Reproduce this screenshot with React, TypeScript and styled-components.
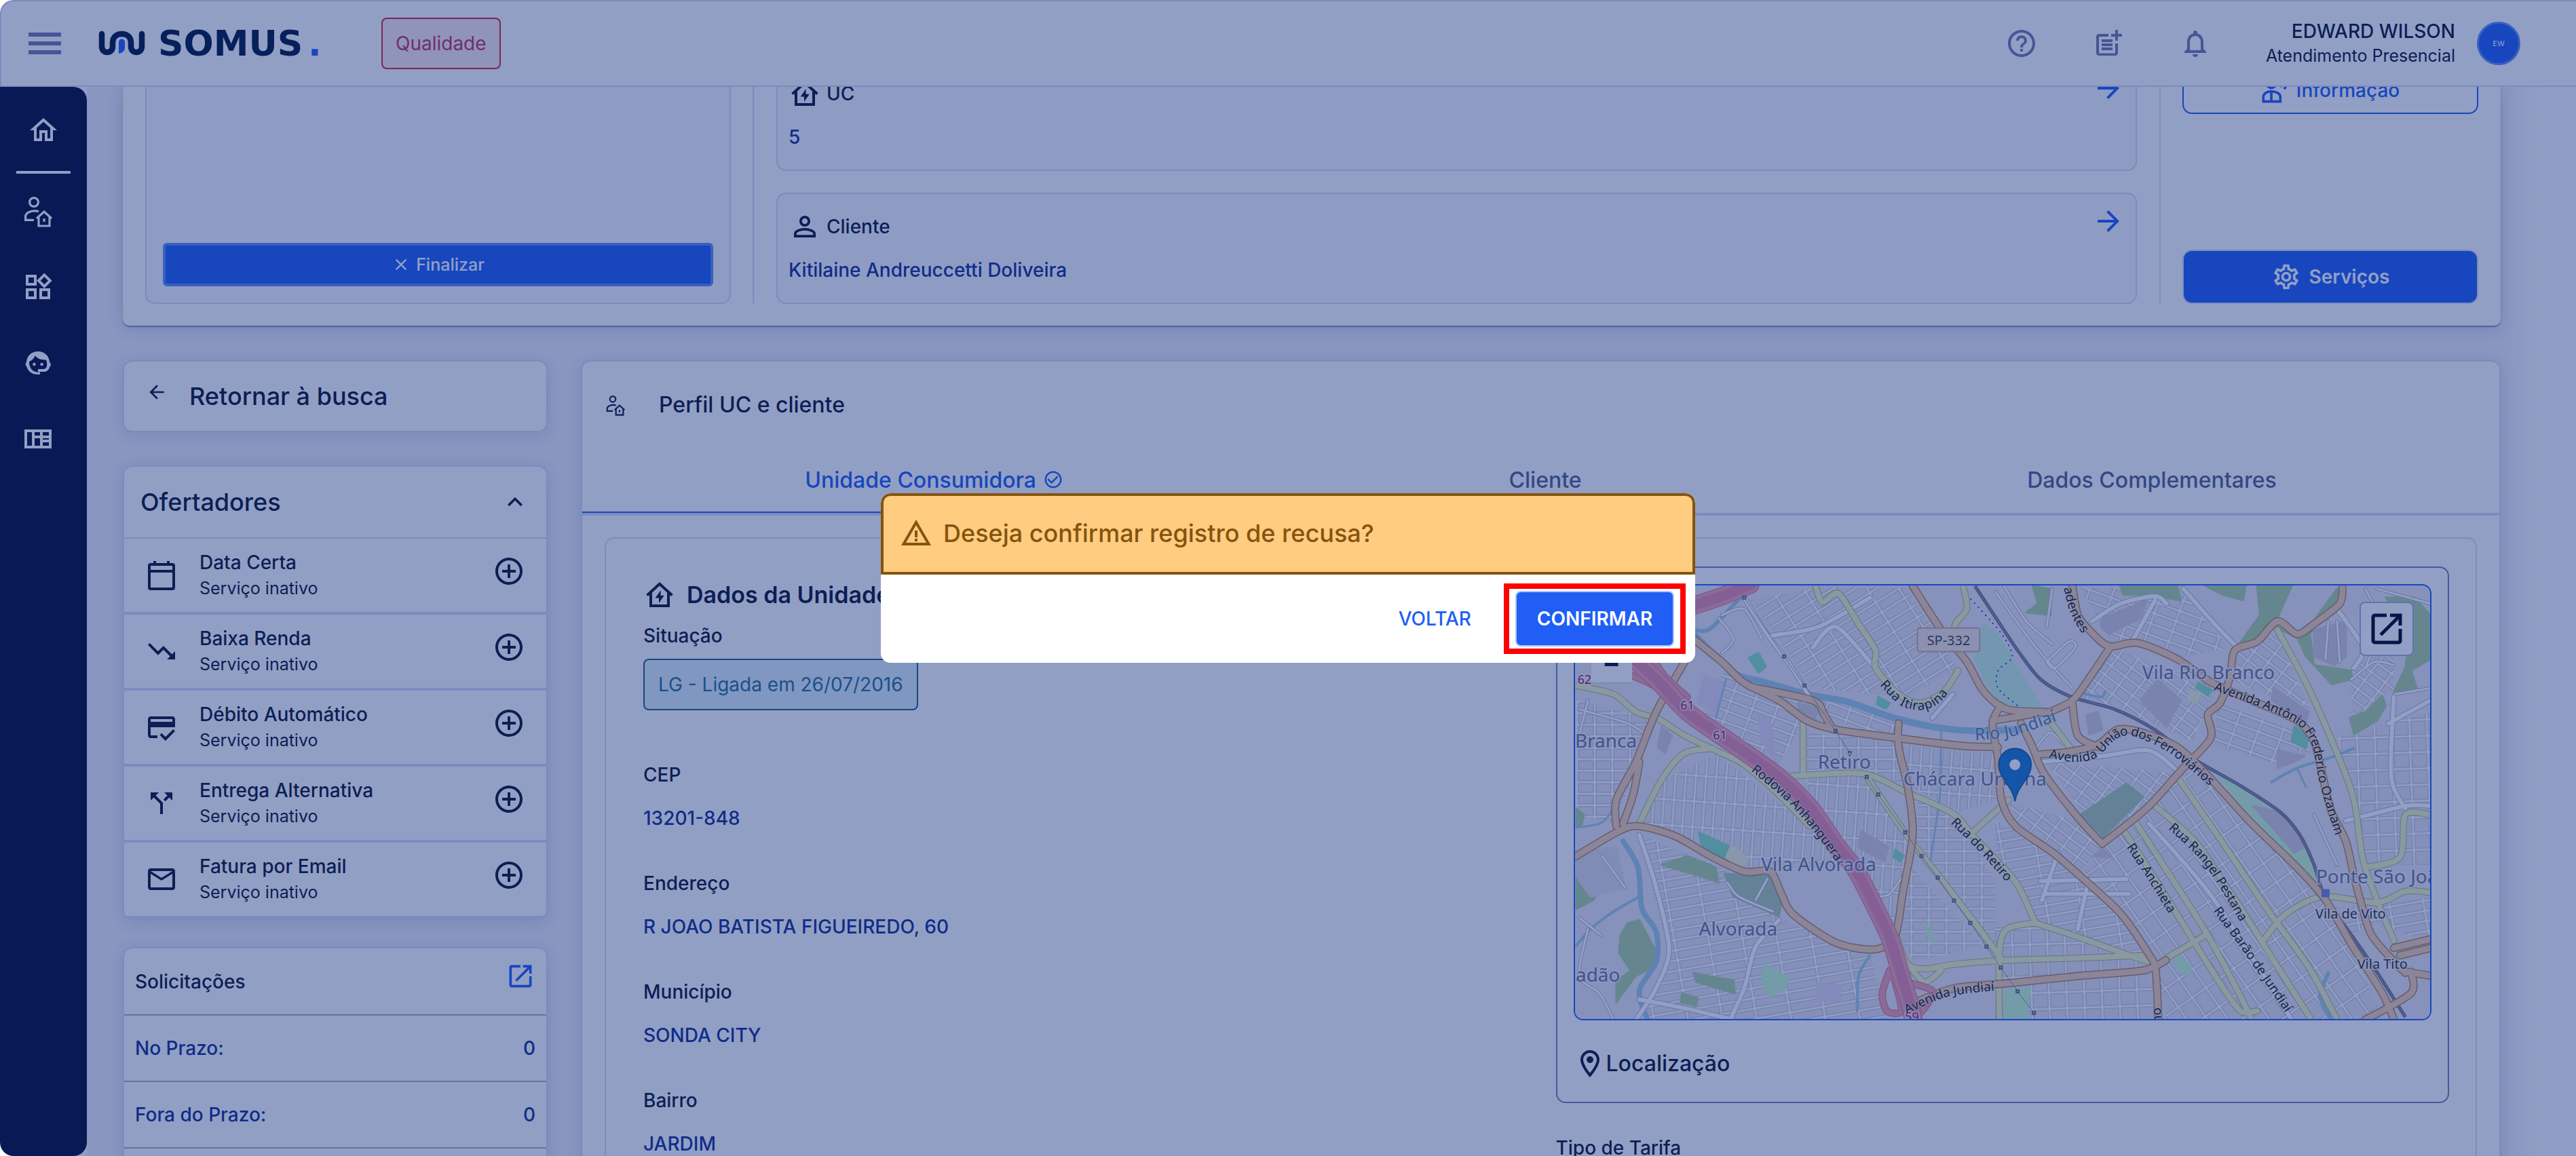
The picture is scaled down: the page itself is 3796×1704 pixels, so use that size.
import React from "react";
import styled, { createGlobalStyle } from "styled-components";
import {
  MdAddCircleOutline,
  MdArrowBack,
  MdCallSplit,
  MdCheckCircleOutline,
  MdClose,
  MdHelpOutline,
  MdKeyboardArrowUp,
  MdMailOutline,
  MdNotificationsNone,
  MdOpenInNew,
  MdOutlineCreditScore,
  MdOutlineHome,
  MdOutlineLocationOn,
  MdOutlineSettings,
  MdOutlineWidgets,
  MdPersonOutline,
  MdPostAdd,
  MdTrendingDown,
  MdWarningAmber,
} from "react-icons/md";

const color = {
  ink: "#0c1534",
  navy: "#040b37",
  logo: "#001843",
  blue: "#205ef5",
  value: "#122f93",
  muted: "#7479ac",
  line: "#d5daf4",
  panel: "#f7f9ff",
  page: "#eeeff8",
};

const GlobalStyle = createGlobalStyle`
  *, *::before, *::after { box-sizing: border-box; }
  body {
    margin: 0;
    background: #fff;
    color: ${color.ink};
    font-family: Inter, "Liberation Sans", sans-serif;
    font-size: 28px;
    line-height: 36px;
  }
  h1, h2, h3, p, dl, dd, ul { margin: 0; padding: 0; font-weight: inherit; }
  button { font-family: inherit; cursor: pointer; }
  svg { display: block; flex: none; }
`;

/* ---------- shell ---------- */

const Shell = styled.div`
  display: flex;
  flex-direction: column;
  height: 100vh;
  overflow: hidden;
  border-radius: 20px 0 0 20px;
  background: #fff;
`;

const Header = styled.header`
  flex: none;
  display: flex;
  align-items: center;
  height: 128px;
  padding: 0 82px 0 40px;
  border: 2px solid ${color.line};
  border-right: 0;
  border-top-left-radius: 20px;
  background: #fff;
`;

const IconButton = styled.button<{ $tone?: string }>`
  display: flex;
  padding: 0;
  border: 0;
  background: none;
  color: ${(p) => p.$tone ?? color.ink};
`;

const MenuButton = styled(IconButton)`
  flex-direction: column;
  gap: 7px;
  margin-right: 55px;
`;

const MenuBar = styled.span`
  width: 48px;
  height: 6px;
  background: ${color.muted};
`;

const Logo = styled.div`
  display: flex;
  align-items: center;
  gap: 18px;
  width: 340px;
  color: ${color.logo};
`;

const Wordmark = styled.span`
  font-family: "DejaVu Sans", sans-serif;
  font-weight: 700;
  font-size: 52px;
  line-height: 56px;
`;

const LogoDot = styled.span`
  margin-left: 8px;
  color: ${color.blue};
`;

const EnvTag = styled.span`
  margin-left: 77px;
  padding: 18px 19px;
  border: 2px solid #d3213f;
  border-radius: 8px;
  background: rgba(211, 47, 80, 0.1);
  color: #c43358;
`;

const HeaderTools = styled.div`
  display: flex;
  align-items: center;
  gap: 80px;
  margin-left: auto;
`;

const User = styled.div`
  display: flex;
  align-items: center;
  gap: 32px;
  text-align: right;
`;

const UserName = styled.p`
  font-size: 28px;
  font-weight: 500;
`;

const UserRole = styled.p`
  font-size: 25px;
`;

const Avatar = styled.span`
  display: grid;
  place-items: center;
  width: 64px;
  height: 64px;
  border: 3px solid #5b8df6;
  border-radius: 50%;
  background: ${color.blue};
  color: #fff;
  font-size: 11px;
`;

const Body = styled.div`
  flex: 1;
  min-height: 0;
  display: flex;
`;

const Sidebar = styled.nav`
  flex: none;
  display: flex;
  flex-direction: column;
  width: 128px;
  padding: 40px 32px;
  gap: 64px;
  border-radius: 0 20px 20px 20px;
  border-top-left-radius: 0;
  background: ${color.navy};
`;

const SideHome = styled.div`
  display: flex;
  justify-content: center;
  margin: 0 -8px -33px;
  padding-bottom: 36px;
  border-bottom: 4px solid #fff;
`;

const Main = styled.main`
  flex: 1;
  min-width: 0;
  overflow: hidden;
  padding: 0 111px 0 53px;
  background: linear-gradient(to left, #fcfcff 48px, ${color.page} 112px);
`;

const Card = styled.section`
  border: 2px solid ${color.line};
  border-radius: 14px;
  background: #fff;
  box-shadow: 0 4px 24px rgba(30, 40, 110, 0.14);
`;

/* ---------- attendance summary ---------- */

const Summary = styled.section`
  display: flex;
  flex-direction: column;
  justify-content: flex-end;
  height: 352px;
  padding: 0 33px 32px;
  overflow: hidden;
  border-radius: 0 0 10px 10px;
  background: #fff;
`;

const SummaryShadow = styled.div`
  margin-bottom: 51px;
  border-radius: 0 0 10px 10px;
  box-shadow: 0 2px 2px #8288b6, 0 4px 24px rgba(30, 40, 110, 0.18);
`;

const SummaryRow = styled.div`
  flex: none;
  display: grid;
  grid-template-columns: 863px minmax(0, 1fr) 436px;
  column-gap: 67px;
`;

const Panel = styled.div`
  display: flex;
  flex-direction: column;
  border: 2px solid ${color.line};
  border-radius: 14px;
  background: ${color.panel};
`;

const CallPanel = styled(Panel)`
  justify-content: flex-end;
  padding: 24px;
`;

const FinishButton = styled.button`
  display: flex;
  align-items: center;
  justify-content: center;
  gap: 8px;
  height: 64px;
  border: 4px solid #5b8df6;
  border-radius: 6px;
  background: ${color.blue};
  color: #fff;
  font-size: 25px;
  font-weight: 500;
`;

const Middle = styled.div`
  position: relative;
  display: flex;
  flex-direction: column;
  gap: 32px;

  &::before,
  &::after {
    content: "";
    position: absolute;
    top: 0;
    bottom: 0;
    width: 2px;
    background: ${color.line};
  }
  &::before { left: -35px; }
  &::after { right: -35px; }
`;

const InfoPanel = styled(Panel)`
  height: 164px;
  padding: 24px 24px 0 16px;
  gap: 22px;
`;

const InfoHead = styled.div`
  display: flex;
  align-items: center;
  gap: 8px;
  height: 48px;
`;

const GoButton = styled(IconButton)`
  align-self: flex-start;
  margin-left: auto;
`;

const Value = styled.p`
  color: ${color.value};
  font-size: 28px;
  font-weight: 500;
`;

const Label = styled.p`
  font-size: 28px;
  font-weight: 500;
`;

const Actions = styled.div`
  display: flex;
  flex-direction: column;
  justify-content: space-between;
`;

const ActionButton = styled.button<{ $outline?: boolean }>`
  display: flex;
  align-items: center;
  justify-content: center;
  gap: 12px;
  height: 80px;
  padding: ${(p) => (p.$outline ? "10px 0 0" : "0")};
  border: 2px solid ${(p) => (p.$outline ? color.blue : color.line)};
  border-radius: 14px;
  background: ${(p) => (p.$outline ? "#fff" : color.blue)};
  color: ${(p) => (p.$outline ? color.blue : "#fff")};
  font-size: 28px;
  font-weight: ${(p) => (p.$outline ? 500 : 600)};
`;

/* ---------- left column ---------- */

const Columns = styled.div`
  display: grid;
  grid-template-columns: 626px minmax(0, 1fr);
  column-gap: 49px;
  align-items: start;
`;

const Aside = styled.aside`
  display: flex;
  flex-direction: column;
`;

const BackCard = styled(Card)`
  display: flex;
  align-items: center;
  gap: 32px;
  height: 106px;
  margin-bottom: 49px;
  padding: 0 32px;
`;

const CardTitle = styled.h2`
  font-size: 36px;
  font-weight: 500;
  line-height: 44px;
`;

const BackIcon = styled(IconButton)`
  padding-bottom: 12px;
`;

const OffersCard = styled(Card)`
  margin-bottom: 40px;
  overflow: hidden;
`;

const OffersHead = styled.div`
  display: flex;
  align-items: center;
  justify-content: space-between;
  height: 106px;
  padding: 0 24px;
  border-bottom: 2px solid ${color.line};
`;

const Offer = styled.li`
  display: flex;
  align-items: center;
  height: 112px;
  padding: 0 31px;
  border-bottom: 4px solid ${color.line};
`;

const OfferList = styled.ul`
  list-style: none;
`;

const OfferText = styled.div`
  flex: 1;
  padding: 0 0 0 32px;
`;

const OfferState = styled.p`
  padding-top: 2px;
  font-size: 25px;
`;

const OfferAdd = styled(IconButton)`
  padding-bottom: 12px;
`;

const RequestsTable = styled.table`
  width: 100%;
  border-collapse: collapse;
  font-size: 28px;
  font-weight: 500;
`;

const RequestCell = styled.td`
  height: 98px;
  padding: 0 16px;
  border-bottom: 2px solid #a4acd0;
  color: ${color.value};
  &:last-child { text-align: right; }
`;

const RequestHead = styled.th`
  height: 98px;
  padding: 0 16px;
  border-bottom: 2px solid #a4acd0;
  font-weight: 500;
  text-align: left;
`;

const RequestLink = styled(IconButton)`
  margin-left: auto;
  padding-bottom: 16px;
`;

/* ---------- profile ---------- */

const Profile = styled(Card)`
  height: 1400px;
`;

const ProfileHead = styled.div`
  display: flex;
  align-items: center;
  gap: 48px;
  height: 127px;
  padding-left: 33px;
`;

const ProfileTitle = styled.h2`
  font-size: 32px;
  font-weight: 500;
`;

const Tabs = styled.div`
  display: flex;
  border-bottom: 4px solid ${color.line};
`;

const Tab = styled.button<{ $active?: boolean }>`
  flex: 1 1 auto;
  display: flex;
  align-items: center;
  justify-content: center;
  gap: 10px;
  height: 96px;
  padding: 0;
  border: 0;
  border-bottom: 2px solid ${(p) => (p.$active ? color.blue : "transparent")};
  background: none;
  color: ${(p) => (p.$active ? color.blue : "#55608c")};
  font-size: 32px;
  font-weight: 500;
`;

const Details = styled.div`
  display: grid;
  grid-template-columns: 1fr 1fr;
  column-gap: 28px;
  height: 1100px;
  margin: 32px 33px;
  padding: 41px 39px 0 55px;
  border: 2px solid ${color.line};
  border-radius: 14px;
`;

const UnitHead = styled.div`
  display: flex;
  align-items: center;
  gap: 16px;
  height: 48px;
  margin: 18px 0;
`;

const UnitTitle = styled.h3`
  font-size: 34px;
  font-weight: 600;
  line-height: 44px;
`;

const StatusChip = styled.span`
  display: inline-block;
  margin: 16px 0 77px;
  padding: 18px 20px;
  border: 2px solid #1f5f84;
  border-radius: 8px;
  background: #def1fb;
  color: #2b6f93;
  font-size: 28px;
`;

const Field = styled.div`
  display: flex;
  flex-direction: column;
  gap: 28px;
  margin-bottom: 60px;
`;

const MapCard = styled.div`
  padding: 24px;
  margin-bottom: 48px;
  border: 2px solid #7580b4;
  border-radius: 14px;
`;

const MapFrame = styled.div`
  position: relative;
  height: 643px;
  overflow: hidden;
  border: 2px solid ${color.blue};
  border-radius: 14px;
`;

const ZoomControl = styled.div`
  position: absolute;
  top: 24px;
  left: 24px;
  display: flex;
  flex-direction: column;
`;

const ZoomButton = styled.button`
  width: 60px;
  height: 60px;
  border: 0;
  border-bottom: 1px solid #ccc;
  background: #fff;
  color: ${color.ink};
  font-size: 40px;
  font-weight: 700;
  line-height: 56px;
`;

const OpenMap = styled.button`
  position: absolute;
  top: 24px;
  right: 24px;
  display: grid;
  place-items: center;
  width: 80px;
  height: 80px;
  padding: 0;
  border: 2px solid #a4b0dc;
  border-radius: 8px;
  background: #fff;
  color: #00051f;
`;

const MapCaption = styled.div`
  display: flex;
  align-items: center;
  height: 48px;
  margin: 40px 0 8px;
  font-size: 32px;
  font-weight: 500;
`;

/* ---------- dialog ---------- */

const Backdrop = styled.div`
  position: fixed;
  inset: 0;
  display: grid;
  place-items: center;
  border-radius: 20px 0 0 20px;
  background: rgba(13, 42, 124, 0.45);
`;

const Dialog = styled.div`
  width: 1200px;
  overflow: hidden;
  border-radius: 14px;
  background: #fff;
`;

const DialogHead = styled.div`
  display: flex;
  align-items: center;
  gap: 16px;
  height: 120px;
  padding: 0 24px 2px;
  border: 4px solid #85540f;
  border-radius: 14px 14px 0 0;
  background: #ffcc80;
  color: #85540f;
`;

const DialogTitle = styled.h2`
  font-size: 36px;
  font-weight: 500;
  line-height: 44px;
`;

const DialogActions = styled.div`
  display: flex;
  align-items: center;
  justify-content: flex-end;
  gap: 48px;
  height: 130px;
  padding: 0 14px 0 0;
`;

const TextButton = styled.button`
  padding: 0;
  border: 0;
  background: none;
  color: ${color.blue};
  font-size: 28px;
  font-weight: 500;
`;

const Highlight = styled.div`
  display: flex;
  padding: 3px 9px;
  border: 8px solid #f00;
`;

const ConfirmButton = styled.button`
  width: 234px;
  height: 82px;
  padding: 0;
  border: 2px solid #a9c5fb;
  border-radius: 8px;
  background: ${color.blue};
  color: #fff;
  font-size: 28px;
  font-weight: 600;
`;

/* ---------- icons ---------- */

const LogoMark = () => (
  <svg width="70" height="38" viewBox="0 0 70 38" fill="none" aria-hidden="true">
    <path
      d="M5 5v18c0 6 3 9 8 9s8-3 8-9v-5c0-8 5-13 13.500-13S48 10 48 18v5c0 6 3 9 8 9s8-3 8-9V5"
      stroke={color.logo}
      strokeWidth="8.500"
      strokeLinecap="round"
    />
    <path d="M30 17c0-6 9-6 9 0v7c0 6-3 9-9 10z" fill={color.blue} />
  </svg>
);

const PersonHomeIcon = ({ size }: { size: number }) => (
  <svg width={size} height={size} viewBox="0 0 24 24" fill="none" stroke="currentColor" strokeWidth="1.600" aria-hidden="true">
    <circle cx="9" cy="5.500" r="3.200" />
    <path d="M12.500 12.300C7 11 2.800 13.500 2.800 16v2.700H9" />
    <path d="M11 17.500l5.500-5 5.500 5M12.500 16.500V23h8v-6.500" />
    <path d="M16.500 17.500v2.500" />
  </svg>
);

const HomeBoltIcon = ({ size = 48 }: { size?: number }) => (
  <svg width={size} height={size} viewBox="0 0 24 24" fill="none" aria-hidden="true">
    <path d="M2.800 12.200L12 3.900l9.200 8.300M5.500 10v10h13V10" stroke="currentColor" strokeWidth="2" />
    <path d="M12.800 8.500l-4 5.700h2.700V18l3.900-5.600h-2.600z" fill="currentColor" />
  </svg>
);

const CalendarIcon = ({ size = 48 }: { size?: number }) => (
  <svg width={size} height={size} viewBox="0 0 24 24" fill="none" stroke="currentColor" strokeWidth="2" aria-hidden="true">
    <rect x="3" y="4" width="18" height="18" rx="1" />
    <path d="M3 9h18M7 1.500V4M17 1.500V4" />
  </svg>
);

const AgentIcon = () => (
  <svg width="48" height="48" viewBox="0 0 24 24" fill="none" aria-hidden="true">
    <path d="M12 3.500c5 0 8.300 3.500 8.500 8 1.200.6 1.200 3 0 3.600-.7 2.600-2.300 3.400-4.500 3.400h-4v-2h4c1.500 0 2.600-1 2.600-3.500 0-1.500-.3-2.500-.6-3.300-4 .2-6.800-1-8-3.200-.8 2-2.400 3.700-4.500 4.500-.2 5 2.800 7.700 6.500 7.700h1.500v1.800H12c-4.500 0-7.500-2.500-8.300-5.800-1-.6-1.200-2.700-.2-3.400C3.800 6.800 7.200 3.500 12 3.500z" fill="currentColor" />
    <circle cx="9.200" cy="13" r="1.100" fill="currentColor" />
    <circle cx="14.800" cy="13" r="1.100" fill="currentColor" />
  </svg>
);

const BoardIcon = () => (
  <svg width="48" height="48" viewBox="0 0 24 24" fill="none" stroke="currentColor" strokeWidth="2" aria-hidden="true">
    <path d="M3 6h18v12H3zM8.500 6v12M14.500 6v12M8.500 10.500h6M14.500 13.500H21M8.500 10.500H21" />
  </svg>
);

const ForwardIcon = () => (
  <svg width="32" height="32" viewBox="4 4 16 16" fill="currentColor" aria-hidden="true">
    <path d="M12 4l-1.410 1.410L16.170 11H4v2h12.170l-5.580 5.590L12 20l8-8z" />
  </svg>
);

const VoiceIcon = () => (
  <svg width="40" height="40" viewBox="0 0 24 24" fill="none" stroke="currentColor" strokeWidth="2.200" aria-hidden="true">
    <circle cx="9" cy="6" r="4" />
    <path d="M2 22v-4c0-3 3-5 7-5s8 2 8 5v4zM9 13v9M17 9c2-2 2-4 1-6M20.500 11c2-3 2-6 1-9" />
  </svg>
);

/* ---------- map ---------- */

type Pt = [number, number];

const project = (originX: number) => (pts: Pt[]): Pt[] =>
  pts.map(([x, y]) => [Math.round(x / 2.376 + originX), Math.round(y / 2.306 - 20)]);

const west = project(-19);
const east = project(621);

const polygon = (pts: Pt[]) => pts.map((p) => p.join(",")).join(" ");

/* Catmull-Rom spline through the points, written as cubic segments. */
const curve = (pts: Pt[]) => {
  let d = `M${pts[0][0]} ${pts[0][1]}`;
  for (let i = 0; i < pts.length - 1; i++) {
    const a = pts[i - 1] ?? pts[i];
    const b = pts[i];
    const c = pts[i + 1];
    const e = pts[i + 2] ?? c;
    d += `C${b[0] + (c[0] - a[0]) / 7} ${b[1] + (c[1] - a[1]) / 7} ${c[0] - (e[0] - b[0]) / 7} ${c[1] - (e[1] - b[1]) / 7} ${c[0]} ${c[1]}`;
  }
  return d;
};

const grids = [
  { id: "g0", w: 26, h: 17, rot: 0 },
  { id: "g5", w: 15, h: 38, rot: 4 },
  { id: "g20", w: 34, h: 16, rot: 20 },
  { id: "g35", w: 26, h: 16, rot: 37 },
  { id: "g57", w: 34, h: 25, rot: 55 },
  { id: "n30", w: 40, h: 17, rot: -32 },
  { id: "n10", w: 50, h: 15, rot: -10 },
  { id: "sq", w: 26, h: 24, rot: -2 },
];

const blocks: [string, Pt[]][] = [
  ["n30", west([[660, 100], [900, 55], [1210, 55], [1390, 330], [1220, 430], [880, 400]])],
  ["g20", west([[570, 330], [860, 420], [1180, 500], [1180, 560], [860, 500], [740, 690], [500, 480]])],
  ["g5", west([[540, 620], [870, 870], [1020, 1010], [780, 1010], [640, 1010], [280, 860], [360, 710]])],
  ["g5", west([[860, 700], [1060, 700], [1210, 900], [1200, 1100], [1150, 1230], [1020, 1010], [870, 800]])],
  ["n10", west([[270, 900], [560, 1010], [770, 1190], [1080, 1300], [1140, 1528], [280, 1528], [370, 1300]])],
  ["g0", west([[1250, 760], [1420, 880], [1520, 1060], [1520, 1320], [1240, 950]])],
  ["g0", west([[50, 440], [330, 510], [180, 860], [50, 830]])],
  ["g5", west([[1190, 590], [1510, 620], [1520, 780], [1400, 820], [1230, 740]])],
  ["g0", west([[860, 550], [1170, 580], [1200, 720], [860, 680]])],
  ["g0", west([[1220, 1000], [1480, 1280], [1230, 1330], [1180, 1240]])],
  ["g35", east([[440, 270], [780, 400], [740, 480], [690, 580], [420, 460], [300, 430], [390, 290]])],
  ["g20", east([[780, 450], [1040, 540], [1110, 620], [1000, 660], [770, 600]])],
  ["g35", east([[860, 270], [990, 210], [1110, 490], [960, 430], [830, 370]])],
  ["g35", east([[180, 650], [640, 690], [380, 920]])],
  ["g57", east([[380, 930], [640, 690], [740, 690], [1150, 1110], [1240, 1280], [1370, 1528], [600, 1528], [560, 1330], [300, 1040]])],
  ["sq", east([[0, 1210], [140, 1200], [540, 1330], [560, 1528], [0, 1528]])],
  ["g35", east([[50, 790], [290, 850], [380, 930], [300, 1030], [90, 880]])],
  ["n10", east([[0, 850], [100, 900], [440, 1170], [520, 1310], [140, 1190], [0, 960]])],
  ["sq", east([[1200, 560], [1528, 480], [1528, 1000], [1300, 1000]])],
  ["g20", east([[300, 55], [640, 55], [820, 260], [660, 290], [400, 240]])],
  ["n10", east([[1160, 1150], [1528, 1110], [1528, 1260], [1300, 1200], [1250, 1260]])],
  ["g35", east([[1240, 330], [1400, 260], [1400, 400], [1260, 500]])],
];

const areas: [string, Pt[]][] = [
  ["#add19e", east([[130, 50], [190, 60], [195, 150], [110, 140], [150, 110]])],
  ["#add19e", east([[740, 50], [880, 50], [870, 100], [800, 80]])],
  ["#add19e", east([[920, 50], [1040, 50], [990, 160], [1060, 210], [1100, 190], [1120, 320], [1250, 340], [1250, 370], [1180, 385], [1090, 290], [1060, 225], [980, 190], [920, 240], [850, 255], [930, 150]])],
  ["#add19e", east([[1200, 60], [1220, 110], [1130, 180], [1090, 230], [1110, 180]])],
  ["#add19e", east([[1370, 90], [1470, 90], [1528, 150], [1528, 300], [1460, 340], [1480, 400], [1400, 410], [1440, 330], [1460, 200]])],
  ["#add19e", east([[1245, 500], [1300, 480], [1360, 425], [1370, 460], [1340, 510], [1260, 555]])],
  ["#add19e", east([[440, 50], [640, 50], [650, 100], [590, 90], [500, 80], [450, 80]])],
  ["#add19e", west([[350, 1000], [440, 970], [540, 1010], [550, 1060], [470, 1035], [380, 1010]])],
  ["#add19e", west([[230, 1200], [270, 1190], [325, 1290], [320, 1350], [260, 1380], [190, 1470], [190, 1400], [240, 1360], [200, 1300], [205, 1240]])],
  ["#add19e", west([[50, 1040], [100, 1045], [125, 1090], [110, 1120], [50, 1150]])],
  ["#add19e", west([[50, 810], [75, 830], [70, 865], [50, 870]])],
  ["#add19e", west([[460, 1370], [600, 1395], [605, 1440], [470, 1400]])],
  ["#add19e", west([[420, 1440], [475, 1455], [470, 1480], [415, 1470]])],
  ["#aacbaf", west([[570, 1030], [730, 1040], [770, 1130], [760, 1175], [600, 1110]])],
  ["#c8facc", west([[710, 1340], [795, 1385], [780, 1430], [725, 1450], [700, 1400]])],
  ["#c8f0dc", west([[1480, 180], [1523, 210], [1680, 460], [1560, 465], [1500, 400], [1450, 300]])],
  ["#c8facc", east([[790, 700], [870, 740], [1040, 880], [1120, 1000], [1120, 1060], [960, 920]])],
  ["#c8facc", east([[30, 1430], [120, 1420], [110, 1528], [30, 1528]])],
  ["#c8facc", east([[640, 1310], [690, 1350], [680, 1380], [630, 1340]])],
  ["#c8facc", west([[1270, 1190], [1310, 1260], [1290, 1260]])],
  ["#88e0be", west([[480, 890], [595, 940], [575, 985], [495, 950]])],
  ["#88e0be", west([[655, 295], [690, 280], [715, 325], [690, 345]])],
  ["#88e0be", west([[1110, 430], [1150, 450], [1135, 468], [1105, 455]])],
  ["#88e0be", west([[1170, 950], [1200, 970], [1185, 990], [1165, 975]])],
  ["#88e0be", east([[1050, 530], [1100, 560], [1090, 605], [1040, 580]])],
  ["#88e0be", east([[712, 380], [760, 405], [745, 425], [705, 400]])],
  ["#d2cdd6", west([[1050, 885], [1145, 940], [1130, 990], [1040, 940]])],
  ["#d2cdd6", west([[350, 530], [385, 560], [360, 620], [335, 600]])],
  ["#d2cdd6", west([[830, 450], [905, 470], [880, 510], [830, 490]])],
  ["#e2d8ee", west([[500, 360], [570, 380], [540, 480], [475, 450]])],
  ["#e2d8ee", west([[690, 490], [730, 500], [745, 640], [700, 580]])],
  ["#e2d8ee", west([[900, 1410], [980, 1410], [975, 1465], [890, 1460]])],
  ["#dfdce6", west([[50, 960], [190, 940], [220, 1080], [100, 1110], [50, 1040]])],
  ["#d2cdd6", east([[380, 160], [530, 100], [510, 160], [400, 215], [370, 190]])],
  ["#d2cdd6", east([[510, 440], [570, 370], [650, 440], [600, 530]])],
  ["#d2cdd6", east([[320, 490], [360, 480], [375, 540], [330, 555]])],
  ["#d2cdd6", east([[1120, 200], [1230, 170], [1230, 290], [1190, 320], [1120, 290]])],
  ["#d2cdd6", east([[905, 800], [1000, 820], [1085, 940], [1050, 960]])],
  ["#d2cdd6", east([[990, 610], [1085, 630], [1050, 650], [990, 670]])],
  ["#d2cdd6", east([[980, 400], [1100, 480], [1090, 510], [970, 440]])],
  ["#d2cdd6", east([[345, 970], [375, 945], [410, 975]])],
  ["#aacbaf", east([[300, 830], [460, 725], [520, 770], [380, 905]])],
  ["#eef0d5", west([[595, 935], [650, 980], [630, 1005], [575, 975]])],
  ["#eef0d5", east([[685, 405], [720, 420], [705, 450], [680, 435]])],
];

const water: [number, Pt[]][] = [
  [6, west([[470, 200], [520, 195], [630, 85]])],
  [10, west([[460, 215], [600, 345], [700, 375], [860, 420], [1000, 445], [1150, 495], [1300, 530], [1450, 545], [1600, 540]])],
  [3, west([[575, 370], [540, 500]])],
  [8, west([[215, 920], [265, 1010], [280, 1150], [330, 1230], [330, 1330], [270, 1430], [300, 1528]])],
  [3, west([[50, 875], [130, 860], [170, 820], [240, 690]])],
  [4, west([[50, 1275], [100, 1220], [180, 1160], [270, 1110]])],
  [3, west([[1330, 540], [1325, 760], [1290, 1000]])],
  [4, west([[1080, 1310], [1040, 1380], [1035, 1500]])],
  [4, east([[970, 720], [1060, 670], [1180, 635], [1260, 605]])],
  [3, east([[1060, 670], [1090, 735]])],
  [4, east([[300, 415], [370, 430], [385, 410]])],
  [6, east([[1170, 1370], [1140, 1450], [1180, 1528]])],
];

const streets: Pt[][] = [
  west([[620, 60], [720, 215], [800, 320], [870, 430]]),
  west([[740, 220], [900, 190], [1080, 90]]),
  west([[880, 260], [960, 190], [1090, 320]]),
  west([[270, 900], [330, 1080], [375, 1290], [330, 1420], [260, 1528]]),
  west([[760, 1190], [680, 1280], [640, 1420], [590, 1528]]),
  west([[270, 1460], [430, 1490], [600, 1528]]),
  west([[1300, 500], [1370, 420]]),
  east([[340, 170], [440, 110], [560, 85], [600, 110]]),
  east([[660, 60], [770, 180], [850, 260]]),
  east([[560, 100], [480, 240]]),
  east([[160, 650], [380, 630], [540, 610], [640, 680]]),
  east([[540, 860], [760, 1110], [1040, 1528]]),
  east([[160, 1055], [460, 1050]]),
  east([[180, 1100], [470, 1100]]),
  east([[220, 960], [165, 1120]]),
  east([[1200, 130], [1290, 260], [1260, 330]]),
  east([[1400, 430], [1390, 700], [1440, 810]]),
  east([[1380, 520], [1528, 440]]),
  east([[1230, 850], [1440, 800], [1528, 800]]),
  east([[320, 1080], [290, 1220]]),
];

const lanes: Pt[][] = [
  west([[550, 160], [600, 230], [560, 280]]),
  west([[560, 150], [640, 130], [700, 230]]),
  west([[60, 470], [230, 520], [300, 560]]),
  west([[90, 440], [60, 560]]),
  west([[60, 1180], [135, 1240]]),
  west([[90, 1220], [60, 1380], [130, 1440], [180, 1528]]),
  west([[140, 970], [220, 1080]]),
  west([[580, 1060], [620, 1110], [740, 1160]]),
  west([[720, 1050], [680, 1120]]),
  west([[1210, 1020], [1150, 1100], [1100, 1110]]),
  east([[0, 70], [80, 180], [160, 280], [270, 400]]),
  east([[30, 50], [110, 170], [200, 250]]),
  east([[180, 310], [260, 240], [280, 260], [210, 330], [180, 310]]),
  east([[180, 190], [200, 60]]),
  east([[1300, 60], [1350, 180], [1300, 330]]),
  east([[1250, 370], [1330, 310], [1400, 320]]),
  east([[1400, 420], [1528, 400]]),
  east([[1170, 170], [1160, 300]]),
  east([[1200, 170], [1210, 310]]),
  east([[1340, 60], [1528, 110]]),
  east([[130, 620], [190, 550], [240, 590]]),
  east([[1120, 830], [1200, 1000]]),
];

const secondary: Pt[][] = [
  west([[890, 55], [915, 105], [970, 75], [1040, 180], [1100, 270], [1100, 330], [1180, 420], [1260, 450], [1340, 410], [1390, 340]]),
  west([[1410, 55], [1420, 130], [1380, 180], [1380, 240]]),
  west([[50, 390], [180, 420], [260, 480], [340, 505], [430, 560], [540, 610], [640, 660], [760, 760], [870, 870]]),
  west([[270, 860], [350, 710], [430, 620], [530, 605]]),
  west([[845, 520], [845, 690]]),
  west([[780, 700], [1050, 690], [1210, 755], [1370, 825], [1440, 900], [1568, 1030], [1610, 1090], [1660, 1200]]),
  west([[1070, 700], [1210, 900], [1330, 1050], [1450, 1200], [1540, 1320]]),
  west([[1170, 1230], [1210, 1335], [1270, 1355], [1380, 1340], [1568, 1325], [1800, 1320], [2040, 1310]]),
  west([[1210, 1335], [1270, 1400], [1330, 1360]]),
  west([[1430, 900], [1568, 780]]),
  west([[1535, 1528], [1535, 1300], [1560, 1220], [1660, 1200]]),
  east([[990, 200], [1100, 400], [1200, 620], [1260, 780], [1290, 980], [1340, 1120], [1400, 1260]]),
  east([[640, 700], [800, 930], [960, 1160], [1100, 1350], [1200, 1528]]),
  east([[550, 790], [700, 920], [800, 1060], [870, 1160], [960, 1300], [1110, 1528]]),
  east([[450, 880], [560, 1050], [690, 1250], [780, 1390], [860, 1500], [920, 1500]]),
  east([[490, 850], [600, 1020], [740, 1230], [850, 1430], [900, 1528]]),
  east([[190, 510], [270, 610]]),
  east([[140, 1200], [300, 1250], [470, 1310], [540, 1330]]),
  east([[600, 1320], [740, 1240]]),
  east([[940, 1260], [1020, 1170], [1150, 1110], [1340, 1130], [1440, 1090], [1528, 1095]]),
  east([[1300, 1010], [1420, 975], [1440, 830], [1528, 830]]),
];

const primary: Pt[][] = [
  west([[430, 310], [330, 480], [260, 650], [190, 780], [190, 870]]),
  west([[270, 650], [250, 760], [215, 860]]),
  west([[50, 970], [200, 885], [270, 870], [400, 905], [520, 970], [640, 1025], [730, 1025], [770, 1100], [810, 1170], [960, 1265], [1100, 1290], [1170, 1240], [1195, 1100], [1230, 900], [1215, 740], [1180, 600], [1180, 520]]),
  west([[460, 230], [560, 310], [640, 380], [760, 440], [860, 510], [960, 540], [1180, 570], [1400, 595], [1530, 600]]),
  west([[660, 395], [880, 440], [920, 490], [950, 540]]),
  west([[1230, 50], [1330, 200], [1420, 310], [1480, 410], [1560, 470], [1700, 480]]),
  west([[1240, 1470], [1380, 1420], [1568, 1405], [1820, 1380], [2040, 1360], [2120, 1325]]),
  west([[1540, 460], [1510, 520], [1530, 640], [1543, 780], [1593, 870], [1723, 960], [1843, 1060], [1963, 1170], [2063, 1310], [2083, 1360], [2093, 1528]]),
  west([[1700, 480], [1510, 510]]),
  east([[270, 50], [290, 150], [330, 200], [400, 255], [500, 245], [640, 300], [760, 380], [900, 440], [1060, 510], [1120, 580], [1150, 700], [1180, 820], [1230, 920], [1260, 1040], [1290, 1150], [1320, 1240], [1400, 1330], [1440, 1370]]),
  east([[400, 265], [340, 350], [270, 440], [180, 485]]),
  east([[1220, 50], [1210, 110], [1120, 180], [1060, 215], [990, 170], [920, 240], [840, 270], [825, 360], [790, 450], [745, 490], [755, 570], [650, 680], [530, 810], [375, 930]]),
  east([[375, 930], [290, 840], [170, 690], [130, 600], [90, 520]]),
  east([[150, 625], [260, 615], [360, 590], [430, 540], [520, 550], [640, 600], [740, 690], [900, 860], [1060, 1010], [1160, 1120], [1250, 1270], [1360, 1440], [1400, 1528]]),
  east([[270, 450], [290, 560], [360, 600]]),
  east([[1400, 1285], [1528, 1255]]),
  east([[1420, 1310], [1528, 1285]]),
  east([[1440, 1365], [1528, 1380]]),
  east([[1460, 1365], [1460, 1440], [1300, 1528]]),
];

const motorway: Pt[][] = [
  west([[180, 240], [330, 370], [440, 480], [600, 590], [760, 700], [870, 805], [960, 930], [1030, 1020], [1090, 1130], [1150, 1250], [1190, 1380], [1220, 1470], [1240, 1560]]),
  west([[440, 125], [560, 85], [660, 45]]),
];

const ramps: Pt[][] = [
  west([[230, 350], [330, 395], [440, 480]]),
  west([[300, 270], [360, 360], [440, 430]]),
  west([[1150, 1360], [1125, 1440], [1140, 1500], [1190, 1500], [1170, 1400], [1150, 1360]]),
  west([[1200, 1400], [1300, 1430], [1270, 1490], [1230, 1528]]),
];

const rail = west([[1450, 50], [1523, 160], [1600, 270], [1680, 370], [1790, 430], [1940, 470], [2080, 540], [2220, 640], [2380, 730], [2520, 820], [2590, 900], [2640, 1000], [2680, 1120], [2750, 1210], [2850, 1350], [2960, 1520]]);
const powerLine = west([[640, 90], [780, 290], [850, 390], [960, 545], [1010, 620]]);
const powerLineSouth = west([[1070, 700], [1110, 760], [1205, 890], [1262, 970], [1318, 1045], [1375, 1122], [1432, 1200], [1490, 1280], [1540, 1352], [1600, 1432], [1657, 1505]]);
const boundary = west([[1420, 80], [1540, 210], [1580, 290], [1530, 340], [1530, 400], [1600, 460]]);

const roadNames: { text: string; pts: Pt[]; size?: number; fill?: string }[] = [
  { text: "Rua Itirapina", pts: west([[1125, 380], [1190, 445], [1260, 462], [1320, 435], [1400, 340]]) },
  { text: "Rodovia Anhanguera", pts: west([[670, 670], [800, 780], [900, 890], [990, 1010]]) },
  { text: "Rua do Retiro", pts: west([[1370, 850], [1470, 945], [1620, 1110]]) },
  { text: "Avenida Jundiaí", pts: west([[1205, 1500], [1350, 1440], [1540, 1415]]) },
  { text: "Rio Jundiaí", pts: west([[1450, 565], [1580, 550], [1760, 490]]), size: 25, fill: "#4d80b3" },
  { text: "adentes", pts: east([[252, 55], [275, 140], [330, 230]]) },
  { text: "Avenida União dos Ferroviários", pts: east([[190, 625], [280, 638], [350, 625], [420, 560], [490, 550], [620, 610], [770, 730]]) },
  { text: "Avenida Antônio Frederico Ozanam", pts: east([[770, 395], [950, 460], [1070, 515], [1125, 590], [1150, 720], [1210, 910]]) },
  { text: "Rua Anchieta", pts: east([[470, 935], [540, 1035], [650, 1210]]) },
  { text: "Rua Rangel Pestana", pts: east([[615, 870], [750, 1000], [900, 1240]]) },
  { text: "Rua Barão de Jundiaí", pts: east([[775, 1150], [880, 1290], [1060, 1540]]) },
  { text: "ou", pts: east([[568, 1488], [572, 1560]]) },
];

const places: { text: string; at: Pt; size: number; start?: boolean; fill?: string }[] = [
  { text: "Branca", at: [46, 602], size: 28, start: true },
  { text: "Retiro", at: [990, 674], size: 28 },
  { text: "Chácara Urbana", at: [1450, 730], size: 28 },
  { text: "Vila Alvorada", at: [900, 1022], size: 28 },
  { text: "Alvorada", at: [618, 1243], size: 28 },
  { text: "adão", at: [48, 1400], size: 28, start: true },
  { text: "Vila Rio Branco", at: [2268, 368], size: 28 },
  { text: "Ponte São João", at: [2647, 1064], size: 28, start: true },
  { text: "Vila de Vito", at: [2767, 1184], size: 20, fill: "#333" },
  { text: "Vila Tito", at: [2880, 1356], size: 20, fill: "#333" },
  { text: "61", at: [440, 472], size: 18, fill: "#a0184c" },
  { text: "61", at: [553, 574], size: 18, fill: "#a0184c" },
  { text: "62", at: [78, 384], size: 18, fill: "#a0184c" },
  { text: "59", at: [1228, 1534], size: 18, fill: "#a0184c" },
];

const Lines = ({ set, width, stroke }: { set: Pt[][]; width: number; stroke: string }) => (
  <g fill="none" stroke={stroke} strokeWidth={width} strokeLinecap="round" strokeLinejoin="round">
    {set.map((pts, i) => (
      <path key={i} d={curve(pts)} />
    ))}
  </g>
);

const CityMap = () => (
  <svg width="100%" height="100%" viewBox="0 0 1264 643" preserveAspectRatio="xMidYMid slice" role="img" aria-label="Mapa">
    <defs>
      {grids.map((g) => (
        <pattern key={g.id} id={g.id} width={g.w} height={g.h} patternUnits="userSpaceOnUse" patternTransform={`rotate(${g.rot})`}>
          <rect width={g.w} height={g.h} fill="#e6e4ec" />
          <path d={`M0 3H${g.w}M3 0V${g.h}`} stroke="#b4b3c6" strokeWidth="5" />
          <path d={`M0 3H${g.w}M3 0V${g.h}`} stroke="#fff" strokeWidth="3" />
        </pattern>
      ))}
      {roadNames.map((r, i) => (
        <path key={i} id={`road-${i}`} d={curve(r.pts)} />
      ))}
    </defs>
    <rect width="1264" height="643" fill="#eae8ee" />
    {blocks.map(([id, pts], i) => (
      <polygon key={i} points={polygon(pts)} fill={`url(#${id})`} />
    ))}
    {areas.map(([fill, pts], i) => (
      <polygon key={i} points={polygon(pts)} fill={fill} stroke={fill} strokeWidth="3" strokeLinejoin="round" />
    ))}
    {water.map(([w, pts], i) => (
      <path key={i} d={curve(pts)} fill="none" stroke="#a3cbe4" strokeWidth={w} strokeLinecap="round" />
    ))}
    <path d={curve(boundary)} fill="none" stroke="#2a2af0" strokeWidth="2" strokeDasharray="2 6" />
    <Lines set={lanes} width={5} stroke="#b4b3c6" />
    <Lines set={lanes} width={3} stroke="#fff" />
    <Lines set={streets} width={8} stroke="#b4b3c6" />
    <Lines set={streets} width={6} stroke="#fff" />
    <Lines set={secondary} width={10} stroke="#a9b47c" />
    <Lines set={secondary} width={8} stroke="#f0f4c0" />
    <path d={curve(rail)} fill="none" stroke="#70758f" strokeWidth="5" />
    <path d={curve(rail)} fill="none" stroke="#aab" strokeWidth="1" />
    <Lines set={primary} width={12} stroke="#b08660" />
    <Lines set={primary} width={9} stroke="#f2cfae" />
    <Lines set={ramps} width={11} stroke="#e0809a" />
    <Lines set={ramps} width={8} stroke="#f0a0ac" />
    <Lines set={motorway} width={27} stroke="#e0708c" />
    <Lines set={motorway} width={25} stroke="#f0a2b0" />
    <Lines set={motorway} width={15} stroke="#e58aac" />
    {[powerLine, powerLineSouth].map((line, n) => (
      <g key={n}>
        <path d={curve(line)} fill="none" stroke="#8a8c9c" strokeWidth="1" />
        {line.map(([x, y], i) => (
          <rect key={i} x={x - 2} y={y - 2} width="4" height="4" fill="#ddd" stroke="#666a80" strokeWidth="2" />
        ))}
      </g>
    ))}
    <rect x="506" y="64" width="92" height="35" rx="4" fill="#f5e4dc" stroke="#c8a8a0" strokeWidth="2" />
    <rect x="1103" y="450" width="12" height="12" fill="#7981d8" />
    <g fontFamily='"Noto Sans", sans-serif' paintOrder="stroke" strokeLinejoin="round">
      <text x="552" y="89" fontSize="20" fill="#444" textAnchor="middle">SP-332</text>
      {places.map((p, i) => {
        const [[x, y]] = west([p.at]);
        return (
          <text key={i} x={x} y={y} fontSize={p.size} fill={p.fill ?? "#6d7498"} stroke="#f4f3fa" strokeWidth="4" strokeOpacity="0.7" textAnchor={p.start ? "start" : "middle"}>
            {p.text}
          </text>
        );
      })}
      {roadNames.map((r, i) => (
        <text key={i} fontSize={r.size ?? 19} fill={r.fill ?? "#1c1c24"} stroke="#f3eee6" strokeWidth="2" strokeOpacity="0.6" dy="5">
          <textPath href={`#road-${i}`}>{r.text}</textPath>
        </text>
      ))}
    </g>
    <path d="M650 320C646 296 626 286 626 266a24 24 0 0 1 48 0C674 286 654 296 650 320z" fill="#1c78cc" stroke="#1563ab" strokeWidth="2" />
    <circle cx="650" cy="266" r="8" fill="#fff" />
  </svg>
);

/* ---------- data ---------- */

const offers = [
  { name: "Data Certa", Icon: CalendarIcon },
  { name: "Baixa Renda", Icon: MdTrendingDown },
  { name: "Débito Automático", Icon: MdOutlineCreditScore },
  { name: "Entrega Alternativa", Icon: MdCallSplit },
  { name: "Fatura por Email", Icon: MdMailOutline },
];

const fields = [
  ["CEP", "13201-848"],
  ["Endereço", "R JOAO BATISTA FIGUEIREDO, 60"],
  ["Município", "SONDA CITY"],
  ["Bairro", "JARDIM"],
];

const requests = [
  ["No Prazo:", "0"],
  ["Fora do Prazo:", "0"],
  ["", ""],
];

export default function App() {
  return (
    <>
      <GlobalStyle />
      <Shell>
        <Header>
          <MenuButton aria-label="Menu">
            <MenuBar />
            <MenuBar />
            <MenuBar />
          </MenuButton>
          <Logo>
            <LogoMark />
            <Wordmark>
              SOMUS<LogoDot>.</LogoDot>
            </Wordmark>
          </Logo>
          <EnvTag>Qualidade</EnvTag>
          <HeaderTools>
            <IconButton $tone={color.muted} aria-label="Ajuda"><MdHelpOutline size={48} /></IconButton>
            <IconButton $tone={color.muted} aria-label="Nova nota"><MdPostAdd size={48} /></IconButton>
            <IconButton $tone={color.muted} aria-label="Notificações"><MdNotificationsNone size={48} /></IconButton>
            <User>
              <div>
                <UserName>EDWARD WILSON</UserName>
                <UserRole>Atendimento Presencial</UserRole>
              </div>
              <Avatar>EW</Avatar>
            </User>
          </HeaderTools>
        </Header>

        <Body>
          <Sidebar>
            <SideHome>
              <IconButton $tone="#fff" aria-label="Início"><MdOutlineHome size={48} /></IconButton>
            </SideHome>
            <IconButton $tone="#fff" aria-label="Clientes"><PersonHomeIcon size={48} /></IconButton>
            <IconButton $tone="#fff" aria-label="Serviços"><MdOutlineWidgets size={48} /></IconButton>
            <IconButton $tone="#fff" aria-label="Atendimento"><AgentIcon /></IconButton>
            <IconButton $tone="#fff" aria-label="Painel"><BoardIcon /></IconButton>
          </Sidebar>

          <Main>
            <SummaryShadow>
              <Summary>
                <SummaryRow>
                  <CallPanel>
                    <FinishButton><MdClose size={28} />Finalizar</FinishButton>
                  </CallPanel>
                  <Middle>
                    <InfoPanel>
                      <InfoHead>
                        <HomeBoltIcon />
                        <Label>UC</Label>
                        <GoButton $tone={color.blue} aria-label="Abrir UC"><ForwardIcon /></GoButton>
                      </InfoHead>
                      <Value>5</Value>
                    </InfoPanel>
                    <InfoPanel>
                      <InfoHead>
                        <MdPersonOutline size={48} />
                        <Label>Cliente</Label>
                        <GoButton $tone={color.blue} aria-label="Abrir cliente"><ForwardIcon /></GoButton>
                      </InfoHead>
                      <Value>Kitilaine Andreuccetti Doliveira</Value>
                    </InfoPanel>
                  </Middle>
                  <Actions>
                    <ActionButton $outline><VoiceIcon />Informação</ActionButton>
                    <ActionButton><MdOutlineSettings size={44} />Serviços</ActionButton>
                  </Actions>
                </SummaryRow>
              </Summary>
            </SummaryShadow>

            <Columns>
              <Aside>
                <BackCard>
                  <BackIcon aria-label="Voltar"><MdArrowBack size={32} /></BackIcon>
                  <CardTitle>Retornar à busca</CardTitle>
                </BackCard>

                <OffersCard>
                  <OffersHead>
                    <CardTitle>Ofertadores</CardTitle>
                    <IconButton aria-label="Recolher"><MdKeyboardArrowUp size={44} /></IconButton>
                  </OffersHead>
                  <OfferList>
                    {offers.map(({ name, Icon }) => (
                      <Offer key={name}>
                        <Icon size={48} />
                        <OfferText>
                          <Label>{name}</Label>
                          <OfferState>Serviço inativo</OfferState>
                        </OfferText>
                        <OfferAdd aria-label={`Adicionar ${name}`}><MdAddCircleOutline size={48} /></OfferAdd>
                      </Offer>
                    ))}
                  </OfferList>
                </OffersCard>

                <Card>
                  <RequestsTable>
                    <thead>
                      <tr>
                        <RequestHead>Solicitações</RequestHead>
                        <RequestHead>
                          <RequestLink $tone={color.blue} aria-label="Abrir solicitações"><MdOpenInNew size={44} /></RequestLink>
                        </RequestHead>
                      </tr>
                    </thead>
                    <tbody>
                      {requests.map(([name, count], i) => (
                        <tr key={i}>
                          <RequestCell>{name}</RequestCell>
                          <RequestCell>{count}</RequestCell>
                        </tr>
                      ))}
                    </tbody>
                  </RequestsTable>
                </Card>
              </Aside>

              <Profile>
                <ProfileHead>
                  <PersonHomeIcon size={32} />
                  <ProfileTitle>Perfil UC e cliente</ProfileTitle>
                </ProfileHead>
                <Tabs role="tablist">
                  <Tab $active role="tab" aria-selected="true">Unidade Consumidora<MdCheckCircleOutline size={30} /></Tab>
                  <Tab role="tab">Cliente</Tab>
                  <Tab role="tab">Dados Complementares</Tab>
                </Tabs>
                <Details>
                  <div>
                    <UnitHead>
                      <HomeBoltIcon />
                      <UnitTitle>Dados da Unidade Consumidora</UnitTitle>
                    </UnitHead>
                    <Label>Situação</Label>
                    <StatusChip>LG - Ligada em 26/07/2016</StatusChip>
                    {fields.map(([name, value]) => (
                      <Field key={name}>
                        <Label>{name}</Label>
                        <Value>{value}</Value>
                      </Field>
                    ))}
                  </div>
                  <div>
                    <MapCard>
                      <MapFrame>
                        <CityMap />
                        <ZoomControl>
                          <ZoomButton aria-label="Aproximar">+</ZoomButton>
                          <ZoomButton aria-label="Afastar">−</ZoomButton>
                        </ZoomControl>
                        <OpenMap aria-label="Abrir mapa"><MdOpenInNew size={60} /></OpenMap>
                      </MapFrame>
                      <MapCaption><MdOutlineLocationOn size={48} />Localização</MapCaption>
                    </MapCard>
                    <Label>Tipo de Tarifa</Label>
                  </div>
                </Details>
              </Profile>
            </Columns>
          </Main>
        </Body>
      </Shell>

      <Backdrop>
        <Dialog role="alertdialog" aria-modal="true" aria-labelledby="dialog-title">
          <DialogHead>
            <MdWarningAmber size={48} />
            <DialogTitle id="dialog-title">Deseja confirmar registro de recusa?</DialogTitle>
          </DialogHead>
          <DialogActions>
            <TextButton>VOLTAR</TextButton>
            <Highlight>
              <ConfirmButton>CONFIRMAR</ConfirmButton>
            </Highlight>
          </DialogActions>
        </Dialog>
      </Backdrop>
    </>
  );
}
